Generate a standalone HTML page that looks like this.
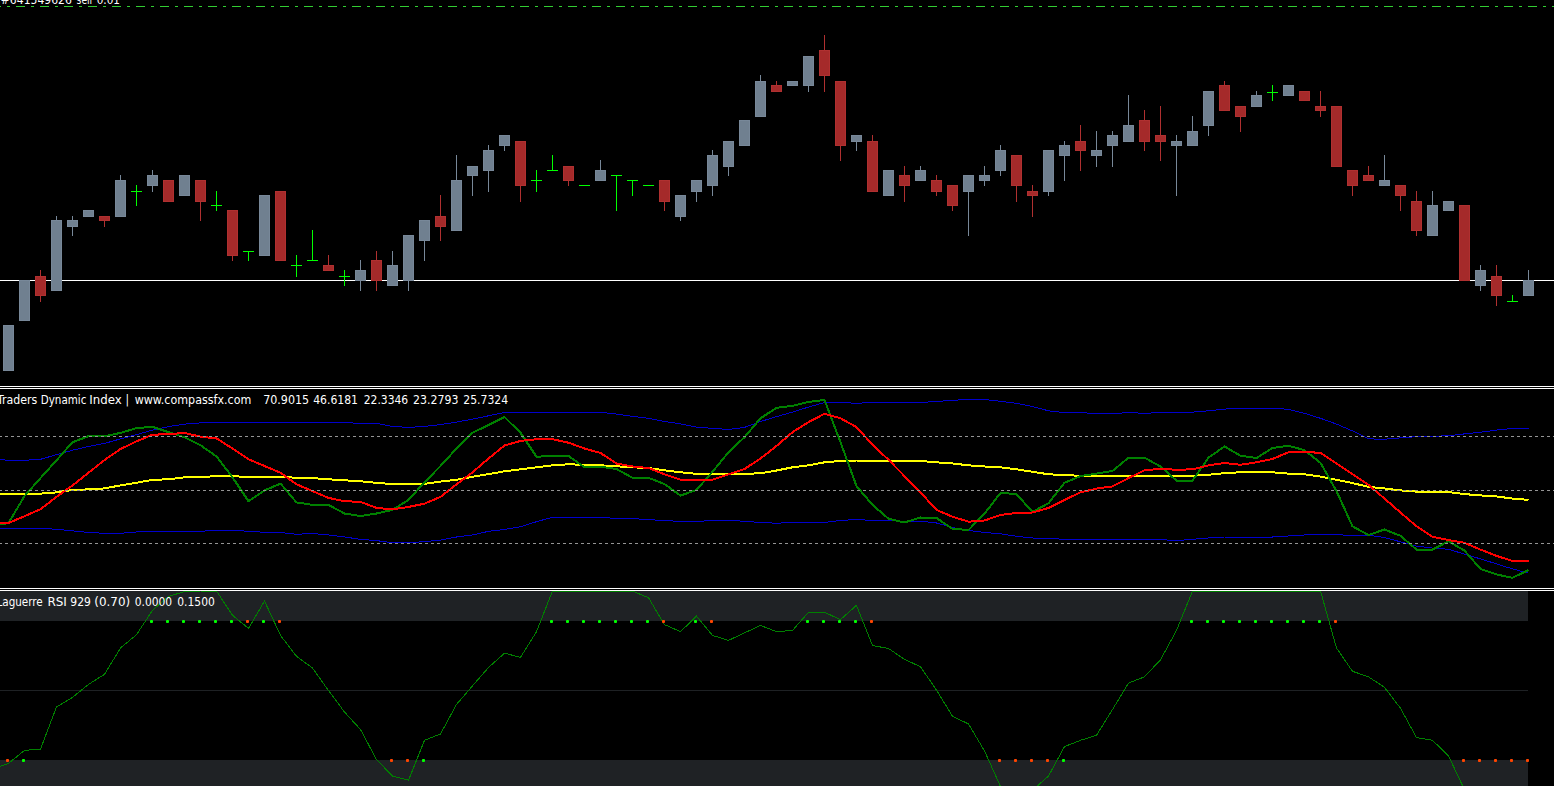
<!DOCTYPE html>
<html><head><meta charset="utf-8"><title>chart</title>
<style>
html,body{margin:0;padding:0;background:#000;overflow:hidden}
svg{display:block}
text{font-family:"DejaVu Sans Condensed","DejaVu Sans","Liberation Sans",sans-serif;font-size:12px;fill:#fff}
</style></head>
<body>
<svg width="1554" height="786" viewBox="0 0 1554 786">
<rect width="1554" height="786" fill="#000"/>
<g shape-rendering="crispEdges">
<line x1="-8" y1="6.5" x2="1554" y2="6.5" stroke="#32cd32" stroke-width="1" stroke-dasharray="9 6 3 6"/>
<rect x="0" y="280" width="1554" height="1" fill="#fff"/>
<rect x="3" y="325" width="11" height="46" fill="#788899"/><rect x="4" y="326" width="9" height="44" fill="#708090"/>
<rect x="19" y="280" width="11" height="41" fill="#788899"/><rect x="20" y="281" width="9" height="39" fill="#708090"/>
<rect x="40" y="270" width="1" height="32" fill="#b03030"/><rect x="35" y="276" width="11" height="20" fill="#b03030"/><rect x="36" y="277" width="9" height="18" fill="#a52a2a"/>
<rect x="56" y="216" width="1" height="75" fill="#788899"/><rect x="51" y="220" width="11" height="71" fill="#788899"/><rect x="52" y="221" width="9" height="69" fill="#708090"/>
<rect x="72" y="216" width="1" height="20" fill="#788899"/><rect x="67" y="220" width="11" height="7" fill="#788899"/><rect x="68" y="221" width="9" height="5" fill="#708090"/>
<rect x="83" y="210" width="11" height="7" fill="#788899"/><rect x="84" y="211" width="9" height="5" fill="#708090"/>
<rect x="104" y="216" width="1" height="11" fill="#b03030"/><rect x="99" y="216" width="11" height="5" fill="#b03030"/><rect x="100" y="217" width="9" height="3" fill="#a52a2a"/>
<rect x="120" y="175" width="1" height="42" fill="#788899"/><rect x="115" y="180" width="11" height="37" fill="#788899"/><rect x="116" y="181" width="9" height="35" fill="#708090"/>
<rect x="136" y="185" width="1" height="21" fill="#00ff00"/><rect x="131" y="191" width="11" height="1" fill="#00ff00"/>
<rect x="152" y="170" width="1" height="22" fill="#788899"/><rect x="147" y="175" width="11" height="11" fill="#788899"/><rect x="148" y="176" width="9" height="9" fill="#708090"/>
<rect x="163" y="180" width="11" height="22" fill="#b03030"/><rect x="164" y="181" width="9" height="20" fill="#a52a2a"/>
<rect x="179" y="175" width="11" height="21" fill="#788899"/><rect x="180" y="176" width="9" height="19" fill="#708090"/>
<rect x="200" y="180" width="1" height="41" fill="#b03030"/><rect x="195" y="180" width="11" height="22" fill="#b03030"/><rect x="196" y="181" width="9" height="20" fill="#a52a2a"/>
<rect x="216" y="191" width="1" height="20" fill="#00ff00"/><rect x="211" y="205" width="11" height="1" fill="#00ff00"/>
<rect x="232" y="210" width="1" height="51" fill="#b03030"/><rect x="227" y="210" width="11" height="46" fill="#b03030"/><rect x="228" y="211" width="9" height="44" fill="#a52a2a"/>
<rect x="248" y="251" width="1" height="10" fill="#00ff00"/><rect x="243" y="251" width="11" height="1" fill="#00ff00"/>
<rect x="259" y="195" width="11" height="61" fill="#788899"/><rect x="260" y="196" width="9" height="59" fill="#708090"/>
<rect x="275" y="191" width="11" height="70" fill="#b03030"/><rect x="276" y="192" width="9" height="68" fill="#a52a2a"/>
<rect x="296" y="255" width="1" height="22" fill="#00ff00"/><rect x="291" y="265" width="11" height="1" fill="#00ff00"/>
<rect x="312" y="230" width="1" height="31" fill="#00ff00"/><rect x="307" y="260" width="11" height="1" fill="#00ff00"/>
<rect x="328" y="255" width="1" height="16" fill="#b03030"/><rect x="323" y="265" width="11" height="6" fill="#b03030"/><rect x="324" y="266" width="9" height="4" fill="#a52a2a"/>
<rect x="344" y="270" width="1" height="16" fill="#00ff00"/><rect x="339" y="276" width="11" height="1" fill="#00ff00"/>
<rect x="360" y="260" width="1" height="31" fill="#788899"/><rect x="355" y="270" width="11" height="11" fill="#788899"/><rect x="356" y="271" width="9" height="9" fill="#708090"/>
<rect x="376" y="251" width="1" height="40" fill="#b03030"/><rect x="371" y="260" width="11" height="21" fill="#b03030"/><rect x="372" y="261" width="9" height="19" fill="#a52a2a"/>
<rect x="392" y="251" width="1" height="35" fill="#788899"/><rect x="387" y="265" width="11" height="21" fill="#788899"/><rect x="388" y="266" width="9" height="19" fill="#708090"/>
<rect x="408" y="235" width="1" height="56" fill="#788899"/><rect x="403" y="235" width="11" height="46" fill="#788899"/><rect x="404" y="236" width="9" height="44" fill="#708090"/>
<rect x="424" y="220" width="1" height="41" fill="#788899"/><rect x="419" y="220" width="11" height="21" fill="#788899"/><rect x="420" y="221" width="9" height="19" fill="#708090"/>
<rect x="440" y="195" width="1" height="46" fill="#b03030"/><rect x="435" y="216" width="11" height="11" fill="#b03030"/><rect x="436" y="217" width="9" height="9" fill="#a52a2a"/>
<rect x="456" y="155" width="1" height="76" fill="#788899"/><rect x="451" y="180" width="11" height="51" fill="#788899"/><rect x="452" y="181" width="9" height="49" fill="#708090"/>
<rect x="472" y="166" width="1" height="30" fill="#788899"/><rect x="467" y="166" width="11" height="10" fill="#788899"/><rect x="468" y="167" width="9" height="8" fill="#708090"/>
<rect x="488" y="145" width="1" height="47" fill="#788899"/><rect x="483" y="150" width="11" height="21" fill="#788899"/><rect x="484" y="151" width="9" height="19" fill="#708090"/>
<rect x="504" y="135" width="1" height="16" fill="#788899"/><rect x="499" y="135" width="11" height="11" fill="#788899"/><rect x="500" y="136" width="9" height="9" fill="#708090"/>
<rect x="520" y="141" width="1" height="61" fill="#b03030"/><rect x="515" y="141" width="11" height="45" fill="#b03030"/><rect x="516" y="142" width="9" height="43" fill="#a52a2a"/>
<rect x="536" y="170" width="1" height="22" fill="#00ff00"/><rect x="531" y="180" width="11" height="1" fill="#00ff00"/>
<rect x="552" y="155" width="1" height="16" fill="#00ff00"/><rect x="547" y="170" width="11" height="1" fill="#00ff00"/>
<rect x="568" y="166" width="1" height="20" fill="#b03030"/><rect x="563" y="166" width="11" height="15" fill="#b03030"/><rect x="564" y="167" width="9" height="13" fill="#a52a2a"/>
<rect x="584" y="185" width="1" height="1" fill="#00ff00"/><rect x="579" y="185" width="11" height="1" fill="#00ff00"/>
<rect x="600" y="160" width="1" height="21" fill="#788899"/><rect x="595" y="170" width="11" height="11" fill="#788899"/><rect x="596" y="171" width="9" height="9" fill="#708090"/>
<rect x="616" y="175" width="1" height="36" fill="#00ff00"/><rect x="611" y="175" width="11" height="1" fill="#00ff00"/>
<rect x="632" y="180" width="1" height="16" fill="#00ff00"/><rect x="627" y="180" width="11" height="1" fill="#00ff00"/>
<rect x="648" y="185" width="1" height="1" fill="#00ff00"/><rect x="643" y="185" width="11" height="1" fill="#00ff00"/>
<rect x="664" y="180" width="1" height="31" fill="#b03030"/><rect x="659" y="180" width="11" height="22" fill="#b03030"/><rect x="660" y="181" width="9" height="20" fill="#a52a2a"/>
<rect x="680" y="195" width="1" height="26" fill="#788899"/><rect x="675" y="195" width="11" height="22" fill="#788899"/><rect x="676" y="196" width="9" height="20" fill="#708090"/>
<rect x="696" y="180" width="1" height="22" fill="#788899"/><rect x="691" y="180" width="11" height="12" fill="#788899"/><rect x="692" y="181" width="9" height="10" fill="#708090"/>
<rect x="712" y="150" width="1" height="46" fill="#788899"/><rect x="707" y="155" width="11" height="31" fill="#788899"/><rect x="708" y="156" width="9" height="29" fill="#708090"/>
<rect x="728" y="141" width="1" height="35" fill="#788899"/><rect x="723" y="141" width="11" height="26" fill="#788899"/><rect x="724" y="142" width="9" height="24" fill="#708090"/>
<rect x="739" y="120" width="11" height="26" fill="#788899"/><rect x="740" y="121" width="9" height="24" fill="#708090"/>
<rect x="760" y="75" width="1" height="42" fill="#788899"/><rect x="755" y="81" width="11" height="36" fill="#788899"/><rect x="756" y="82" width="9" height="34" fill="#708090"/>
<rect x="776" y="81" width="1" height="11" fill="#b03030"/><rect x="771" y="85" width="11" height="7" fill="#b03030"/><rect x="772" y="86" width="9" height="5" fill="#a52a2a"/>
<rect x="787" y="81" width="11" height="5" fill="#788899"/><rect x="788" y="82" width="9" height="3" fill="#708090"/>
<rect x="808" y="56" width="1" height="36" fill="#788899"/><rect x="803" y="56" width="11" height="30" fill="#788899"/><rect x="804" y="57" width="9" height="28" fill="#708090"/>
<rect x="824" y="35" width="1" height="57" fill="#b03030"/><rect x="819" y="50" width="11" height="26" fill="#b03030"/><rect x="820" y="51" width="9" height="24" fill="#a52a2a"/>
<rect x="840" y="81" width="1" height="80" fill="#b03030"/><rect x="835" y="81" width="11" height="65" fill="#b03030"/><rect x="836" y="82" width="9" height="63" fill="#a52a2a"/>
<rect x="856" y="135" width="1" height="16" fill="#788899"/><rect x="851" y="135" width="11" height="7" fill="#788899"/><rect x="852" y="136" width="9" height="5" fill="#708090"/>
<rect x="872" y="135" width="1" height="57" fill="#b03030"/><rect x="867" y="141" width="11" height="51" fill="#b03030"/><rect x="868" y="142" width="9" height="49" fill="#a52a2a"/>
<rect x="883" y="170" width="11" height="26" fill="#788899"/><rect x="884" y="171" width="9" height="24" fill="#708090"/>
<rect x="904" y="166" width="1" height="36" fill="#b03030"/><rect x="899" y="175" width="11" height="11" fill="#b03030"/><rect x="900" y="176" width="9" height="9" fill="#a52a2a"/>
<rect x="920" y="166" width="1" height="15" fill="#788899"/><rect x="915" y="170" width="11" height="11" fill="#788899"/><rect x="916" y="171" width="9" height="9" fill="#708090"/>
<rect x="936" y="175" width="1" height="21" fill="#b03030"/><rect x="931" y="180" width="11" height="12" fill="#b03030"/><rect x="932" y="181" width="9" height="10" fill="#a52a2a"/>
<rect x="952" y="185" width="1" height="26" fill="#b03030"/><rect x="947" y="185" width="11" height="21" fill="#b03030"/><rect x="948" y="186" width="9" height="19" fill="#a52a2a"/>
<rect x="968" y="175" width="1" height="61" fill="#788899"/><rect x="963" y="175" width="11" height="17" fill="#788899"/><rect x="964" y="176" width="9" height="15" fill="#708090"/>
<rect x="984" y="166" width="1" height="20" fill="#788899"/><rect x="979" y="175" width="11" height="6" fill="#788899"/><rect x="980" y="176" width="9" height="4" fill="#708090"/>
<rect x="1000" y="145" width="1" height="31" fill="#788899"/><rect x="995" y="150" width="11" height="21" fill="#788899"/><rect x="996" y="151" width="9" height="19" fill="#708090"/>
<rect x="1016" y="155" width="1" height="47" fill="#b03030"/><rect x="1011" y="155" width="11" height="31" fill="#b03030"/><rect x="1012" y="156" width="9" height="29" fill="#a52a2a"/>
<rect x="1032" y="185" width="1" height="32" fill="#b03030"/><rect x="1027" y="191" width="11" height="5" fill="#b03030"/><rect x="1028" y="192" width="9" height="3" fill="#a52a2a"/>
<rect x="1048" y="150" width="1" height="46" fill="#788899"/><rect x="1043" y="150" width="11" height="42" fill="#788899"/><rect x="1044" y="151" width="9" height="40" fill="#708090"/>
<rect x="1064" y="141" width="1" height="40" fill="#788899"/><rect x="1059" y="145" width="11" height="11" fill="#788899"/><rect x="1060" y="146" width="9" height="9" fill="#708090"/>
<rect x="1080" y="125" width="1" height="46" fill="#b03030"/><rect x="1075" y="141" width="11" height="10" fill="#b03030"/><rect x="1076" y="142" width="9" height="8" fill="#a52a2a"/>
<rect x="1096" y="131" width="1" height="36" fill="#788899"/><rect x="1091" y="150" width="11" height="6" fill="#788899"/><rect x="1092" y="151" width="9" height="4" fill="#708090"/>
<rect x="1112" y="131" width="1" height="36" fill="#788899"/><rect x="1107" y="135" width="11" height="11" fill="#788899"/><rect x="1108" y="136" width="9" height="9" fill="#708090"/>
<rect x="1128" y="95" width="1" height="47" fill="#788899"/><rect x="1123" y="125" width="11" height="17" fill="#788899"/><rect x="1124" y="126" width="9" height="15" fill="#708090"/>
<rect x="1144" y="110" width="1" height="41" fill="#b03030"/><rect x="1139" y="120" width="11" height="22" fill="#b03030"/><rect x="1140" y="121" width="9" height="20" fill="#a52a2a"/>
<rect x="1160" y="106" width="1" height="55" fill="#b03030"/><rect x="1155" y="135" width="11" height="7" fill="#b03030"/><rect x="1156" y="136" width="9" height="5" fill="#a52a2a"/>
<rect x="1176" y="135" width="1" height="61" fill="#788899"/><rect x="1171" y="141" width="11" height="5" fill="#788899"/><rect x="1172" y="142" width="9" height="3" fill="#708090"/>
<rect x="1192" y="116" width="1" height="30" fill="#788899"/><rect x="1187" y="131" width="11" height="15" fill="#788899"/><rect x="1188" y="132" width="9" height="13" fill="#708090"/>
<rect x="1208" y="91" width="1" height="45" fill="#788899"/><rect x="1203" y="91" width="11" height="35" fill="#788899"/><rect x="1204" y="92" width="9" height="33" fill="#708090"/>
<rect x="1224" y="81" width="1" height="30" fill="#b03030"/><rect x="1219" y="85" width="11" height="26" fill="#b03030"/><rect x="1220" y="86" width="9" height="24" fill="#a52a2a"/>
<rect x="1240" y="106" width="1" height="26" fill="#b03030"/><rect x="1235" y="106" width="11" height="11" fill="#b03030"/><rect x="1236" y="107" width="9" height="9" fill="#a52a2a"/>
<rect x="1256" y="91" width="1" height="16" fill="#788899"/><rect x="1251" y="95" width="11" height="12" fill="#788899"/><rect x="1252" y="96" width="9" height="10" fill="#708090"/>
<rect x="1272" y="85" width="1" height="16" fill="#00ff00"/><rect x="1267" y="92" width="11" height="1" fill="#00ff00"/>
<rect x="1283" y="85" width="11" height="11" fill="#788899"/><rect x="1284" y="86" width="9" height="9" fill="#708090"/>
<rect x="1299" y="91" width="11" height="10" fill="#b03030"/><rect x="1300" y="92" width="9" height="8" fill="#a52a2a"/>
<rect x="1320" y="91" width="1" height="26" fill="#b03030"/><rect x="1315" y="106" width="11" height="5" fill="#b03030"/><rect x="1316" y="107" width="9" height="3" fill="#a52a2a"/>
<rect x="1331" y="106" width="11" height="61" fill="#b03030"/><rect x="1332" y="107" width="9" height="59" fill="#a52a2a"/>
<rect x="1352" y="170" width="1" height="26" fill="#b03030"/><rect x="1347" y="170" width="11" height="16" fill="#b03030"/><rect x="1348" y="171" width="9" height="14" fill="#a52a2a"/>
<rect x="1368" y="166" width="1" height="15" fill="#b03030"/><rect x="1363" y="175" width="11" height="6" fill="#b03030"/><rect x="1364" y="176" width="9" height="4" fill="#a52a2a"/>
<rect x="1384" y="155" width="1" height="31" fill="#788899"/><rect x="1379" y="180" width="11" height="6" fill="#788899"/><rect x="1380" y="181" width="9" height="4" fill="#708090"/>
<rect x="1400" y="185" width="1" height="26" fill="#b03030"/><rect x="1395" y="185" width="11" height="11" fill="#b03030"/><rect x="1396" y="186" width="9" height="9" fill="#a52a2a"/>
<rect x="1416" y="191" width="1" height="45" fill="#b03030"/><rect x="1411" y="201" width="11" height="30" fill="#b03030"/><rect x="1412" y="202" width="9" height="28" fill="#a52a2a"/>
<rect x="1432" y="191" width="1" height="45" fill="#788899"/><rect x="1427" y="205" width="11" height="31" fill="#788899"/><rect x="1428" y="206" width="9" height="29" fill="#708090"/>
<rect x="1443" y="201" width="11" height="10" fill="#788899"/><rect x="1444" y="202" width="9" height="8" fill="#708090"/>
<rect x="1459" y="205" width="11" height="76" fill="#b03030"/><rect x="1460" y="206" width="9" height="74" fill="#a52a2a"/>
<rect x="1480" y="265" width="1" height="26" fill="#788899"/><rect x="1475" y="270" width="11" height="16" fill="#788899"/><rect x="1476" y="271" width="9" height="14" fill="#708090"/>
<rect x="1496" y="265" width="1" height="41" fill="#b03030"/><rect x="1491" y="276" width="11" height="20" fill="#b03030"/><rect x="1492" y="277" width="9" height="18" fill="#a52a2a"/>
<rect x="1512" y="295" width="1" height="6" fill="#00ff00"/><rect x="1507" y="301" width="11" height="1" fill="#00ff00"/>
<rect x="1528" y="270" width="1" height="26" fill="#788899"/><rect x="1523" y="280" width="11" height="16" fill="#788899"/><rect x="1524" y="281" width="9" height="14" fill="#708090"/>
<rect x="0" y="386" width="1554" height="1" fill="#fff"/>
<rect x="0" y="388" width="1554" height="1" fill="#fff"/>
<rect x="0" y="588" width="1554" height="1" fill="#fff"/>
<rect x="0" y="590" width="1554" height="1" fill="#fff"/>
<polyline points="-7.5,459.0 8.5,460.3 24.5,460.3 40.5,459.3 56.5,454.7 72.5,450.2 88.5,446.5 104.5,443.4 120.5,438.9 136.5,434.7 152.5,430.1 168.5,426.6 184.5,424.1 200.5,422.9 216.5,422.1 232.5,422.1 248.5,422.1 264.5,422.1 280.5,422.1 296.5,422.1 312.5,422.1 328.5,422.1 344.5,422.9 360.5,423.1 376.5,423.4 392.5,426.4 408.5,427.4 424.5,426.4 440.5,424.6 456.5,422.1 472.5,419.1 488.5,415.8 504.5,412.6 520.5,412.3 536.5,412.3 552.5,412.3 568.5,412.3 584.5,412.3 600.5,412.3 616.5,414.1 632.5,416.3 648.5,418.3 664.5,421.4 680.5,423.9 696.5,427.1 712.5,428.4 728.5,429.4 744.5,427.4 760.5,421.6 776.5,416.6 792.5,412.1 808.5,407.1 824.5,402.5 840.5,402.5 856.5,403.3 872.5,402.5 888.5,402.5 904.5,402.5 920.5,402.5 936.5,401.5 952.5,400.3 968.5,399.5 984.5,399.5 1000.5,401.3 1016.5,403.3 1032.5,406.6 1048.5,410.8 1064.5,412.6 1080.5,412.6 1096.5,413.6 1112.5,413.6 1128.5,412.6 1144.5,413.3 1160.5,412.6 1176.5,412.6 1192.5,412.1 1208.5,410.8 1224.5,409.1 1240.5,408.3 1256.5,408.3 1272.5,408.3 1288.5,409.3 1304.5,413.3 1320.5,418.3 1336.5,424.1 1352.5,430.9 1368.5,438.9 1384.5,439.2 1400.5,437.9 1416.5,436.7 1432.5,436.4 1448.5,435.7 1464.5,433.9 1480.5,432.2 1496.5,430.1 1512.5,428.4 1528.5,428.4" fill="none" stroke="#0000cd" stroke-width="1" stroke-linejoin="round"/>
<polyline points="-7.5,528.3 8.5,528.3 24.5,528.3 40.5,528.3 56.5,529.3 72.5,530.8 88.5,532.5 104.5,533.3 120.5,533.3 136.5,532.0 152.5,531.3 168.5,531.3 184.5,531.3 200.5,531.3 216.5,530.3 232.5,530.3 248.5,531.3 264.5,532.3 280.5,532.5 296.5,534.3 312.5,533.5 328.5,535.0 344.5,537.0 360.5,539.3 376.5,540.6 392.5,542.8 408.5,542.8 424.5,541.6 440.5,540.1 456.5,537.0 472.5,535.0 488.5,531.3 504.5,529.5 520.5,526.8 536.5,521.7 552.5,517.2 568.5,517.2 584.5,517.2 600.5,517.2 616.5,518.5 632.5,518.5 648.5,519.7 664.5,520.5 680.5,521.5 696.5,521.5 712.5,520.5 728.5,520.5 744.5,521.2 760.5,522.5 776.5,523.2 792.5,522.5 808.5,522.5 824.5,522.5 840.5,520.5 856.5,519.5 872.5,520.5 888.5,520.5 904.5,521.2 920.5,521.2 936.5,523.0 952.5,527.5 968.5,530.5 984.5,532.5 1000.5,533.8 1016.5,536.3 1032.5,538.0 1048.5,538.0 1064.5,539.6 1080.5,539.6 1096.5,539.6 1112.5,539.6 1128.5,539.6 1144.5,539.6 1160.5,539.6 1176.5,540.6 1192.5,539.3 1208.5,538.0 1224.5,537.0 1240.5,537.0 1256.5,537.0 1272.5,537.0 1288.5,536.0 1304.5,535.0 1320.5,534.3 1336.5,534.3 1352.5,536.0 1368.5,535.3 1384.5,537.5 1400.5,541.8 1416.5,546.1 1432.5,548.1 1448.5,549.3 1464.5,554.1 1480.5,558.9 1496.5,563.9 1512.5,568.9 1528.5,573.2" fill="none" stroke="#0000cd" stroke-width="1" stroke-linejoin="round"/>
<polyline points="-7.5,493.6 8.5,493.6 24.5,493.6 40.5,493.6 56.5,492.4 72.5,489.9 88.5,489.4 104.5,488.4 120.5,485.4 136.5,482.8 152.5,479.8 168.5,479.3 184.5,477.3 200.5,476.8 216.5,476.3 232.5,476.3 248.5,476.8 264.5,476.8 280.5,476.8 296.5,477.8 312.5,478.1 328.5,479.3 344.5,480.3 360.5,481.3 376.5,482.8 392.5,484.1 408.5,484.1 424.5,483.8 440.5,481.6 456.5,479.8 472.5,476.8 488.5,474.1 504.5,471.3 520.5,469.3 536.5,467.3 552.5,465.3 568.5,464.3 584.5,464.8 600.5,465.3 616.5,466.3 632.5,467.3 648.5,468.0 664.5,470.3 680.5,472.3 696.5,473.8 712.5,474.3 728.5,474.3 744.5,473.8 760.5,473.3 776.5,470.5 792.5,467.3 808.5,465.3 824.5,462.3 840.5,461.0 856.5,460.5 872.5,460.5 888.5,460.5 904.5,460.5 920.5,461.0 936.5,462.3 952.5,463.5 968.5,465.3 984.5,466.5 1000.5,467.3 1016.5,469.3 1032.5,471.8 1048.5,474.3 1064.5,475.1 1080.5,475.8 1096.5,475.8 1112.5,475.8 1128.5,475.8 1144.5,475.8 1160.5,475.8 1176.5,475.8 1192.5,475.8 1208.5,474.8 1224.5,473.1 1240.5,472.3 1256.5,471.8 1272.5,472.3 1288.5,473.6 1304.5,474.3 1320.5,476.6 1336.5,479.8 1352.5,483.1 1368.5,486.9 1384.5,488.4 1400.5,490.4 1416.5,491.6 1432.5,491.9 1448.5,492.1 1464.5,494.1 1480.5,495.4 1496.5,496.4 1512.5,498.6 1528.5,499.9" fill="none" stroke="#ffff00" stroke-width="2" stroke-linejoin="round"/>
<polyline points="-7.5,525.8 8.5,523.0 24.5,496.1 40.5,478.1 56.5,460.3 72.5,442.2 88.5,436.2 104.5,436.2 120.5,432.9 136.5,428.1 152.5,426.9 168.5,432.2 184.5,437.2 200.5,445.2 216.5,456.5 232.5,477.3 248.5,501.2 264.5,490.4 280.5,483.6 296.5,502.4 312.5,504.9 328.5,504.9 344.5,513.5 360.5,516.0 376.5,513.5 392.5,509.9 408.5,499.9 424.5,482.3 440.5,466.0 456.5,448.5 472.5,432.7 488.5,425.1 504.5,417.1 520.5,432.7 536.5,456.7 552.5,456.0 568.5,456.0 584.5,467.3 600.5,466.8 616.5,469.0 632.5,477.8 648.5,477.8 664.5,484.1 680.5,495.6 696.5,489.9 712.5,471.8 728.5,452.2 744.5,437.2 760.5,418.3 776.5,407.8 792.5,405.8 808.5,402.0 824.5,400.0 840.5,442.2 856.5,486.1 872.5,504.9 888.5,518.7 904.5,522.5 920.5,517.5 936.5,518.0 952.5,528.8 968.5,530.0 984.5,513.7 1000.5,492.9 1016.5,494.1 1032.5,511.9 1048.5,503.2 1064.5,482.8 1080.5,476.1 1096.5,473.6 1112.5,471.0 1128.5,457.7 1144.5,457.7 1160.5,466.5 1176.5,480.6 1192.5,480.6 1208.5,457.7 1224.5,446.5 1240.5,455.7 1256.5,458.0 1272.5,448.0 1288.5,445.7 1304.5,450.2 1320.5,462.8 1336.5,491.1 1352.5,526.3 1368.5,535.0 1384.5,529.5 1400.5,535.8 1416.5,549.6 1432.5,549.6 1448.5,541.3 1464.5,550.6 1480.5,568.9 1496.5,574.4 1512.5,577.9 1528.5,569.9" fill="none" stroke="#008000" stroke-width="2" stroke-linejoin="round"/>
<polyline points="-7.5,523.0 8.5,523.0 24.5,516.2 40.5,509.2 56.5,496.9 72.5,485.4 88.5,472.8 104.5,460.0 120.5,449.0 136.5,441.4 152.5,434.7 168.5,434.2 184.5,432.9 200.5,436.7 216.5,438.4 232.5,448.5 248.5,459.3 264.5,466.0 280.5,472.8 296.5,484.3 312.5,491.1 328.5,497.9 344.5,501.2 360.5,501.9 376.5,507.9 392.5,509.4 408.5,506.9 424.5,503.7 440.5,496.9 456.5,484.3 472.5,472.3 488.5,458.5 504.5,445.5 520.5,440.9 536.5,439.2 552.5,439.2 568.5,442.7 584.5,448.5 600.5,453.0 616.5,463.5 632.5,466.5 648.5,468.0 664.5,474.3 680.5,479.6 696.5,479.6 712.5,479.6 728.5,474.3 744.5,469.0 760.5,458.5 776.5,446.0 792.5,432.2 808.5,422.1 824.5,413.8 840.5,418.3 856.5,427.1 872.5,444.7 888.5,459.8 904.5,476.1 920.5,492.4 936.5,509.9 952.5,516.7 968.5,521.7 984.5,520.5 1000.5,515.0 1016.5,513.0 1032.5,512.5 1048.5,507.9 1064.5,499.9 1080.5,492.4 1096.5,488.6 1112.5,486.4 1128.5,478.1 1144.5,470.3 1160.5,468.8 1176.5,469.8 1192.5,469.3 1208.5,465.3 1224.5,463.0 1240.5,464.8 1256.5,462.3 1272.5,459.0 1288.5,452.2 1304.5,452.2 1320.5,452.7 1336.5,463.5 1352.5,474.3 1368.5,484.8 1384.5,498.6 1400.5,512.5 1416.5,526.3 1432.5,536.8 1448.5,540.1 1464.5,542.8 1480.5,549.6 1496.5,555.9 1512.5,560.9 1528.5,560.9" fill="none" stroke="#ff0000" stroke-width="2" stroke-linejoin="round"/>
<line x1="-1" y1="436.5" x2="1554" y2="436.5" stroke="#949494" stroke-width="1" stroke-dasharray="3 3"/>
<line x1="-1" y1="490.5" x2="1554" y2="490.5" stroke="#949494" stroke-width="1" stroke-dasharray="3 3"/>
<line x1="-1" y1="543.5" x2="1554" y2="543.5" stroke="#949494" stroke-width="1" stroke-dasharray="3 3"/>
<rect x="0" y="591" width="1528" height="30" fill="#1f2225"/>
<rect x="0" y="760" width="1528" height="26" fill="#1f2225"/>
<rect x="0" y="690" width="1528" height="1" fill="#1e2124"/>
<clipPath id="lc"><rect x="0" y="591" width="1554" height="195"/></clipPath>
<polyline clip-path="url(#lc)" points="-7.5,768.7 8.5,763.4 24.5,750.4 40.5,749.1 56.5,706.9 72.5,697.4 88.5,684.4 104.5,674.3 120.5,648.0 136.5,634.7 152.5,610.3 168.5,596.5 184.5,591.5 200.5,591.0 216.5,591.0 232.5,615.3 248.5,628.4 264.5,601.0 280.5,635.4 296.5,656.3 312.5,668.0 328.5,690.6 344.5,712.0 360.5,729.5 376.5,759.6 392.5,776.0 408.5,780.2 424.5,740.3 440.5,734.0 456.5,704.4 472.5,685.9 488.5,667.5 504.5,653.2 520.5,657.3 536.5,631.7 552.5,591.0 568.5,591.0 584.5,591.0 600.5,591.0 616.5,591.0 632.5,591.0 648.5,597.8 664.5,624.6 680.5,631.7 696.5,616.1 712.5,635.4 728.5,640.4 744.5,632.9 760.5,625.4 776.5,631.7 792.5,630.4 808.5,612.3 824.5,612.3 840.5,619.6 856.5,605.3 872.5,645.5 888.5,648.5 904.5,659.3 920.5,666.8 936.5,690.1 952.5,716.2 968.5,724.0 984.5,750.9 1000.5,786.5 1016.5,793.5 1032.5,790.3 1048.5,776.0 1064.5,746.6 1080.5,740.3 1096.5,735.3 1112.5,709.5 1128.5,683.1 1144.5,676.8 1160.5,659.8 1176.5,630.4 1192.5,591.0 1208.5,591.0 1224.5,591.0 1240.5,591.0 1256.5,591.0 1272.5,591.0 1288.5,591.0 1304.5,591.0 1320.5,591.0 1336.5,648.0 1352.5,671.3 1368.5,676.8 1384.5,687.4 1400.5,708.2 1416.5,737.6 1432.5,740.3 1448.5,755.9 1464.5,789.8 1480.5,814.8 1496.5,814.8 1512.5,814.8 1528.5,814.8" fill="none" stroke="#008000" stroke-width="1"/>
<rect x="150" y="620" width="3" height="3" rx="0.9" fill="#00ff00" shape-rendering="geometricPrecision"/><rect x="166" y="620" width="3" height="3" rx="0.9" fill="#00ff00" shape-rendering="geometricPrecision"/><rect x="182" y="620" width="3" height="3" rx="0.9" fill="#00ff00" shape-rendering="geometricPrecision"/><rect x="198" y="620" width="3" height="3" rx="0.9" fill="#00ff00" shape-rendering="geometricPrecision"/><rect x="214" y="620" width="3" height="3" rx="0.9" fill="#00ff00" shape-rendering="geometricPrecision"/><rect x="230" y="620" width="3" height="3" rx="0.9" fill="#00ff00" shape-rendering="geometricPrecision"/><rect x="246" y="620" width="3" height="3" rx="0.9" fill="#ff4500" shape-rendering="geometricPrecision"/><rect x="262" y="620" width="3" height="3" rx="0.9" fill="#00ff00" shape-rendering="geometricPrecision"/><rect x="278" y="620" width="3" height="3" rx="0.9" fill="#ff4500" shape-rendering="geometricPrecision"/><rect x="550" y="620" width="3" height="3" rx="0.9" fill="#00ff00" shape-rendering="geometricPrecision"/><rect x="566" y="620" width="3" height="3" rx="0.9" fill="#00ff00" shape-rendering="geometricPrecision"/><rect x="582" y="620" width="3" height="3" rx="0.9" fill="#00ff00" shape-rendering="geometricPrecision"/><rect x="598" y="620" width="3" height="3" rx="0.9" fill="#00ff00" shape-rendering="geometricPrecision"/><rect x="614" y="620" width="3" height="3" rx="0.9" fill="#00ff00" shape-rendering="geometricPrecision"/><rect x="630" y="620" width="3" height="3" rx="0.9" fill="#00ff00" shape-rendering="geometricPrecision"/><rect x="646" y="620" width="3" height="3" rx="0.9" fill="#00ff00" shape-rendering="geometricPrecision"/><rect x="662" y="620" width="3" height="3" rx="0.9" fill="#ff4500" shape-rendering="geometricPrecision"/><rect x="694" y="620" width="3" height="3" rx="0.9" fill="#00ff00" shape-rendering="geometricPrecision"/><rect x="710" y="620" width="3" height="3" rx="0.9" fill="#ff4500" shape-rendering="geometricPrecision"/><rect x="806" y="620" width="3" height="3" rx="0.9" fill="#00ff00" shape-rendering="geometricPrecision"/><rect x="822" y="620" width="3" height="3" rx="0.9" fill="#00ff00" shape-rendering="geometricPrecision"/><rect x="838" y="620" width="3" height="3" rx="0.9" fill="#00ff00" shape-rendering="geometricPrecision"/><rect x="854" y="620" width="3" height="3" rx="0.9" fill="#00ff00" shape-rendering="geometricPrecision"/><rect x="870" y="620" width="3" height="3" rx="0.9" fill="#ff4500" shape-rendering="geometricPrecision"/><rect x="1190" y="620" width="3" height="3" rx="0.9" fill="#00ff00" shape-rendering="geometricPrecision"/><rect x="1206" y="620" width="3" height="3" rx="0.9" fill="#00ff00" shape-rendering="geometricPrecision"/><rect x="1222" y="620" width="3" height="3" rx="0.9" fill="#00ff00" shape-rendering="geometricPrecision"/><rect x="1238" y="620" width="3" height="3" rx="0.9" fill="#00ff00" shape-rendering="geometricPrecision"/><rect x="1254" y="620" width="3" height="3" rx="0.9" fill="#00ff00" shape-rendering="geometricPrecision"/><rect x="1270" y="620" width="3" height="3" rx="0.9" fill="#00ff00" shape-rendering="geometricPrecision"/><rect x="1286" y="620" width="3" height="3" rx="0.9" fill="#00ff00" shape-rendering="geometricPrecision"/><rect x="1302" y="620" width="3" height="3" rx="0.9" fill="#00ff00" shape-rendering="geometricPrecision"/><rect x="1318" y="620" width="3" height="3" rx="0.9" fill="#00ff00" shape-rendering="geometricPrecision"/><rect x="1334" y="620" width="3" height="3" rx="0.9" fill="#ff4500" shape-rendering="geometricPrecision"/>
<rect x="6" y="759" width="3" height="3" rx="0.9" fill="#ff4500" shape-rendering="geometricPrecision"/><rect x="22" y="759" width="3" height="3" rx="0.9" fill="#00ff00" shape-rendering="geometricPrecision"/><rect x="390" y="759" width="3" height="3" rx="0.9" fill="#ff4500" shape-rendering="geometricPrecision"/><rect x="406" y="759" width="3" height="3" rx="0.9" fill="#ff4500" shape-rendering="geometricPrecision"/><rect x="422" y="759" width="3" height="3" rx="0.9" fill="#00ff00" shape-rendering="geometricPrecision"/><rect x="998" y="759" width="3" height="3" rx="0.9" fill="#ff4500" shape-rendering="geometricPrecision"/><rect x="1014" y="759" width="3" height="3" rx="0.9" fill="#ff4500" shape-rendering="geometricPrecision"/><rect x="1030" y="759" width="3" height="3" rx="0.9" fill="#ff4500" shape-rendering="geometricPrecision"/><rect x="1046" y="759" width="3" height="3" rx="0.9" fill="#ff4500" shape-rendering="geometricPrecision"/><rect x="1062" y="759" width="3" height="3" rx="0.9" fill="#00ff00" shape-rendering="geometricPrecision"/><rect x="1462" y="759" width="3" height="3" rx="0.9" fill="#ff4500" shape-rendering="geometricPrecision"/><rect x="1478" y="759" width="3" height="3" rx="0.9" fill="#ff4500" shape-rendering="geometricPrecision"/><rect x="1494" y="759" width="3" height="3" rx="0.9" fill="#ff4500" shape-rendering="geometricPrecision"/><rect x="1510" y="759" width="3" height="3" rx="0.9" fill="#ff4500" shape-rendering="geometricPrecision"/><rect x="1526" y="759" width="3" height="3" rx="0.9" fill="#ff4500" shape-rendering="geometricPrecision"/>
</g>
<text x="0.8" y="4" textLength="71.1" lengthAdjust="spacingAndGlyphs">#641549626</text><text x="76.6" y="4" textLength="15.6" lengthAdjust="spacingAndGlyphs">sell</text><text x="96.7" y="4" textLength="23.3" lengthAdjust="spacingAndGlyphs">0.01</text>
<text x="-3.0" y="404" textLength="40.3" lengthAdjust="spacingAndGlyphs">Traders</text><text x="40.8" y="404" textLength="45.6" lengthAdjust="spacingAndGlyphs">Dynamic</text><text x="89.3" y="404" textLength="32.4" lengthAdjust="spacingAndGlyphs">Index</text><text x="125.5" y="404" textLength="3.6" lengthAdjust="spacingAndGlyphs">|</text><text x="134.7" y="404" textLength="116.6" lengthAdjust="spacingAndGlyphs">www.compassfx.com</text><text x="263.2" y="404" textLength="46.0" lengthAdjust="spacingAndGlyphs">70.9015</text><text x="313.2" y="404" textLength="44.8" lengthAdjust="spacingAndGlyphs">46.6181</text><text x="363.7" y="404" textLength="44.5" lengthAdjust="spacingAndGlyphs">22.3346</text><text x="413.1" y="404" textLength="45.4" lengthAdjust="spacingAndGlyphs">23.2793</text><text x="463.3" y="404" textLength="44.9" lengthAdjust="spacingAndGlyphs">25.7324</text>
<text x="-3.5" y="606" textLength="46.2" lengthAdjust="spacingAndGlyphs">Laguerre</text><text x="47.4" y="606" textLength="19.5" lengthAdjust="spacingAndGlyphs">RSI</text><text x="70.3" y="606" textLength="20.6" lengthAdjust="spacingAndGlyphs">929</text><text x="94.3" y="606" textLength="35.9" lengthAdjust="spacingAndGlyphs">(0.70)</text><text x="134.7" y="606" textLength="37.4" lengthAdjust="spacingAndGlyphs">0.0000</text><text x="177.3" y="606" textLength="37.5" lengthAdjust="spacingAndGlyphs">0.1500</text>
</svg>
</body></html>
